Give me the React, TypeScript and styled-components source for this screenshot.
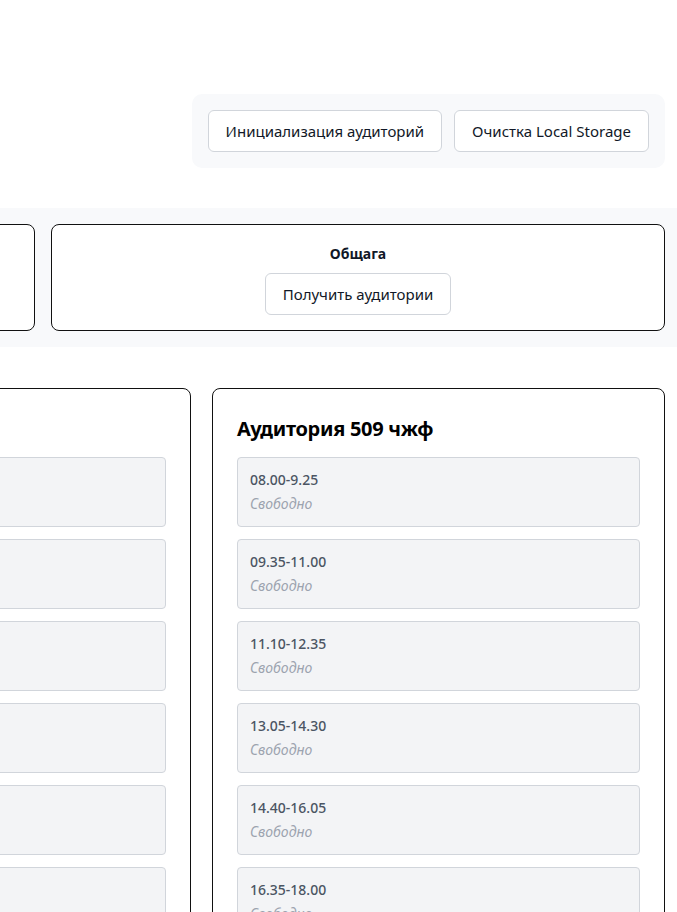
import styled, { createGlobalStyle } from 'styled-components';

const GlobalStyle = createGlobalStyle`
  body {
    margin: 0;
    font-family: "Noto Sans", "Open Sans", sans-serif;
    color: #111827;
    background: #fff;
  }
`;

const SLOTS = [
  '08.00-9.25',
  '09.35-11.00',
  '11.10-12.35',
  '13.05-14.30',
  '14.40-16.05',
  '16.35-18.00',
  '18.10-19.35',
  '19.45-21.10',
];

const S = {
  Page: styled.div`
    width: 100vw;
    overflow: hidden;
    padding-top: 94px;
  `,

  ToolbarRow: styled.div`
    display: flex;
    justify-content: flex-end;
    padding-right: 12px;
  `,

  Toolbar: styled.div`
    display: flex;
    gap: 12px;
    padding: 16px;
    background: #f8f9fb;
    border-radius: 10px;
  `,

  Button: styled.button`
    height: 42px;
    padding: 0 17px;
    font-family: inherit;
    font-size: 15px;
    color: #111827;
    background: #fff;
    border: 1px solid #d1d5db;
    border-radius: 6px;
    white-space: nowrap;
    cursor: pointer;
  `,

  Band: styled.div`
    display: flex;
    justify-content: flex-end;
    gap: 16px;
    margin-top: 40px;
    padding: 16px 12px;
    background: #f8f9fb;
  `,

  Building: styled.div`
    flex: 0 0 614px;
    display: flex;
    flex-direction: column;
    align-items: center;
    gap: 8px;
    box-sizing: border-box;
    height: 107px;
    padding: 18px 16px 15px;
    border: 1px solid #111;
    border-radius: 8px;
    background: #fff;
  `,

  BuildingName: styled.div`
    font-size: 14px;
    line-height: 22px;
    font-weight: 700;
  `,

  Rooms: styled.div`
    display: flex;
    justify-content: flex-end;
    gap: 21px;
    margin-top: 41px;
    padding-right: 12px;
  `,

  Room: styled.div`
    flex: 0 0 453px;
    box-sizing: border-box;
    padding: 26px 24px 24px;
    border: 1px solid #111;
    border-radius: 8px;
    background: #fff;
  `,

  RoomTitle: styled.h2`
    margin: 0 0 14px;
    font-size: 20px;
    line-height: 28px;
    font-weight: 700;
    letter-spacing: -0.3px;
    color: #000;
  `,

  SlotList: styled.div`
    display: flex;
    flex-direction: column;
    gap: 12px;
  `,

  Slot: styled.div`
    display: flex;
    flex-direction: column;
    gap: 4px;
    padding: 12px;
    background: #f3f4f6;
    border: 1px solid #d1d5db;
    border-radius: 4px;
  `,

  Time: styled.span`
    font-size: 14px;
    line-height: 20px;
    font-weight: 500;
    color: #4b5563;
  `,

  Status: styled.span`
    font-size: 14px;
    line-height: 20px;
    font-style: italic;
    color: #9ca3af;
  `,
};

const Room = ({ name }: { name: string }) => (
  <S.Room>
    <S.RoomTitle>{name}</S.RoomTitle>
    <S.SlotList>
      {SLOTS.map((time) => (
        <S.Slot key={time}>
          <S.Time>{time}</S.Time>
          <S.Status>Свободно</S.Status>
        </S.Slot>
      ))}
    </S.SlotList>
  </S.Room>
);

const App = () => (
  <S.Page>
    <GlobalStyle />
    <S.ToolbarRow>
      <S.Toolbar>
        <S.Button>Инициализация аудиторий</S.Button>
        <S.Button>Очистка Local Storage</S.Button>
      </S.Toolbar>
    </S.ToolbarRow>

    <S.Band>
      <S.Building>
        <S.BuildingName>Главный корпус</S.BuildingName>
        <S.Button>Получить аудитории</S.Button>
      </S.Building>
      <S.Building>
        <S.BuildingName>Общага</S.BuildingName>
        <S.Button>Получить аудитории</S.Button>
      </S.Building>
    </S.Band>

    <S.Rooms>
      <Room name="Аудитория 508 чжф" />
      <Room name="Аудитория 509 чжф" />
    </S.Rooms>
  </S.Page>
);

export default App;
